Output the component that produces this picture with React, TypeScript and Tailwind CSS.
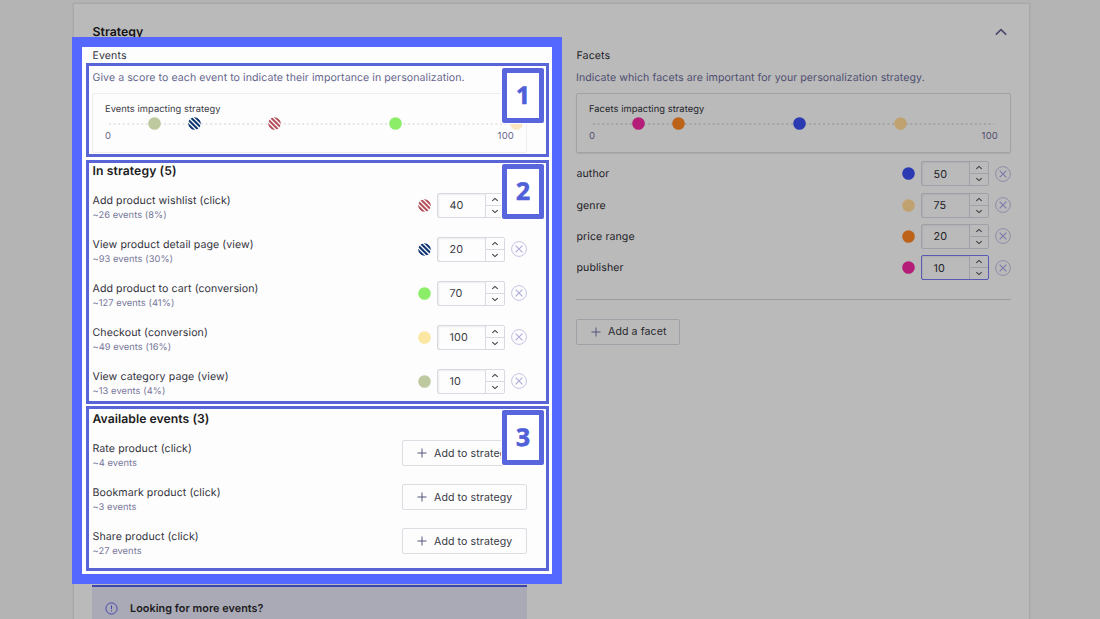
import React from "react";

type Tone = "light" | "dim";

function Dot({ fill, x }: { fill: string; x?: number }) {
  const stripe = fill === "navy" ? "#0f3672" : fill === "red" ? "#b5505a" : null;
  const pos = x === undefined ? "block shrink-0" : "absolute -top-1.5 block";
  return (
    <svg width="13" height="13" viewBox="0 0 13 13" className={pos} style={x === undefined ? undefined : { left: x }}>
      {stripe ? (
        <>
          <defs>
            <clipPath id={"clip-" + fill}>
              <circle cx="6.5" cy="6.5" r="6.3" />
            </clipPath>
          </defs>
          <g clipPath={"url(#clip-" + fill + ")"}>
            <rect width="13" height="13" fill="#fff" />
            <path
              d="M-9.2 -2 L7.8 15 M-4.4 -2 L12.6 15 M0.4 -2 L17.4 15 M5.2 -2 L22.2 15"
              stroke={stripe}
              strokeWidth="2.1"
            />
          </g>
        </>
      ) : (
        <circle cx="6.5" cy="6.5" r="6.3" fill={fill} />
      )}
    </svg>
  );
}

function Chevron({ up, className }: { up?: boolean; className?: string }) {
  return (
    <svg width="8" height="5" viewBox="0 0 8 5" fill="none" stroke="currentColor" strokeWidth="1.1" className={className}>
      <path d={up ? "M1.3 3.8 L4 1.4 L6.7 3.8" : "M1.3 1.2 L4 3.6 L6.7 1.2"} />
    </svg>
  );
}

function Stepper({ value, tone, focused }: { value: number; tone: Tone; focused?: boolean }) {
  const line = focused ? "border-[#5759b4]" : tone === "light" ? "border-[#d9d9e2]" : "border-[#a0a0a8]";
  const inner = tone === "light" ? "border-[#d9d9e2]" : "border-[#a0a0a8]";
  return (
    <div className={"flex h-[25px] w-[68px] shrink-0 rounded-[2px] border " + line}>
      <div className={"flex flex-1 items-center border-r pt-[2px] pl-[11.5px] text-[10.8px] tracking-[0.1px] shadow-[inset_1px_1px_2px_rgba(0,0,0,0.07)] " + inner}>
        {value}
      </div>
      <div className="flex w-[18px] flex-col text-[#3c3c46]">
        <div className={"flex flex-1 items-center justify-center border-b " + inner}>
          <Chevron up />
        </div>
        <div className="flex flex-1 items-center justify-center">
          <Chevron />
        </div>
      </div>
    </div>
  );
}

function Remove({ tone }: { tone: Tone }) {
  return (
    <svg width="16" height="16" viewBox="0 0 16 16" fill="none" className="block shrink-0">
      <circle cx="8" cy="8" r="7.4" stroke={tone === "light" ? "#c5c3e2" : "#8d8da6"} strokeWidth="1" />
      <path d="M4.6 4.6 L11.4 11.4 M11.4 4.6 L4.6 11.4" stroke={tone === "light" ? "#aeabdb" : "#7a7aac"} strokeWidth="1.1" />
    </svg>
  );
}

function PlusButton({ label, tone }: { label: string; tone: Tone }) {
  const look = tone === "light" ? "w-[125px] border-[#dcdce3] text-[#3a3a44]" : "w-[104px] border-[#a0a0a6] text-[#29292f]";
  return (
    <button className={"flex h-[26px] items-center rounded-[2px] border pl-[14px] text-[10.6px] tracking-[0.09px] whitespace-nowrap " + look}>
      <svg width="10" height="10" viewBox="0 0 10 10" stroke="#55557c" strokeWidth="1" className="mr-[7px] shrink-0">
        <path d="M5 0.5V9.5M0.5 5H9.5" />
      </svg>
      <span className="pt-px">{label}</span>
    </button>
  );
}

function ScaleCard({ title, tone, marks }: { title: string; tone: Tone; marks: { fill: string; x: number }[] }) {
  const look = tone === "light" ? "border-[#ededf2]" : "border-[#a2a2a6] shadow-[0_1px_1px_rgba(0,0,0,0.08)]";
  return (
    <div className={"h-[60px] w-[435px] rounded-[2px] border px-3 pt-2 " + look}>
      <div className={"h-[15px] text-[9.3px] leading-[16px] tracking-[0.07px] " + (tone === "light" ? "text-[#3a3a44]" : "text-[#222228]")}>{title}</div>
      <div className="relative mt-[6px] h-[2px]">
        <svg width="409" height="2" className="block">
          <path d="M4 1H405" stroke={tone === "light" ? "#cfcfd6" : "#909098"} strokeWidth="1" strokeDasharray="2 2.6" />
        </svg>
        {marks.map((m) => (
          <Dot key={m.x} fill={m.fill} x={m.x} />
        ))}
      </div>
      <div className={"mt-[5px] flex justify-between text-[9.5px] leading-[13px] tracking-[0.02em] " + (tone === "light" ? "text-[#66668a]" : "text-[#50506e]")}>
        <span>0</span>
        <span>100</span>
      </div>
    </div>
  );
}

function EventName({ name, sub }: { name: string; sub: string }) {
  return (
    <div className="flex-1 pt-[6px] pl-[0.5px]">
      <div className="h-[14px] text-[10.6px] leading-[16px] tracking-[0.08px] text-[#33333c]">{name}</div>
      <div className="h-[16px] text-[9.3px] leading-[17px] tracking-[0.07px] text-[#77779a]">{sub}</div>
    </div>
  );
}

const events = [
  { name: "Add product wishlist (click)", sub: "~26 events (8%)", fill: "red", value: 40 },
  { name: "View product detail page (view)", sub: "~93 events (30%)", fill: "navy", value: 20 },
  { name: "Add product to cart (conversion)", sub: "~127 events (41%)", fill: "#8cee68", value: 70 },
  { name: "Checkout (conversion)", sub: "~49 events (16%)", fill: "#fbe6a2", value: 100 },
  { name: "View category page (view)", sub: "~13 events (4%)", fill: "#bec9a0", value: 10 },
];

const available = [
  { name: "Rate product (click)", sub: "~4 events" },
  { name: "Bookmark product (click)", sub: "~3 events" },
  { name: "Share product (click)", sub: "~27 events" },
];

const facets = [
  { name: "author", fill: "#2b39b3", value: 50 },
  { name: "genre", fill: "#bfa270", value: 75 },
  { name: "price range", fill: "#bd6219", value: 20 },
  { name: "publisher", fill: "#b41d78", value: 10 },
];

const zones = [
  { n: 1, box: "top-[63px] h-[94px]", badge: "top-[68px]" },
  { n: 2, box: "top-[160px] h-[244px]", badge: "top-[164px]" },
  { n: 3, box: "top-[406px] h-[165px]", badge: "top-[410px]" },
];

export default function App() {
  return (
    <div className="relative h-[619px] w-[1100px] overflow-hidden bg-[#b4b4b4] pt-[3px] pl-[73px] font-['Inter',sans-serif] [text-rendering:geometricPrecision]">
      <div className="h-[640px] w-[957px] border border-[#a9a9ab] bg-[#bababa] px-[18px] shadow-[0_0_2px_rgba(0,0,0,0.08)]">
        <div className="flex h-[43px] items-center justify-between pt-[14px] pl-[0.5px]">
          <h2 className="mb-px text-[12.3px] font-semibold tracking-[0.02px] text-[#111114]">Strategy</h2>
          <svg width="14" height="8" viewBox="0 0 14 8" fill="none" stroke="#48486c" strokeWidth="1.6" className="mr-[3px] mb-[2px]">
            <path d="M1.8 6.6 L7 1.6 L12.2 6.6" />
          </svg>
        </div>
        <div className="absolute top-[37px] left-[72px] h-[547px] w-[490px] border-[10px] border-[#5468ff] bg-[#fdfdfd]" />
        <div className="relative flex gap-[49px]">
          <section className="w-[435px]">
            <div className="h-[16px] pl-[0.5px] text-[10.6px] leading-[18px] tracking-[0.1px] text-[#33333c]">Events</div>
            <p className="mt-[6px] h-[16px] pl-[0.5px] text-[10.6px] leading-[18px] tracking-[0.06px] whitespace-nowrap text-[#66668c]">
              Give a score to each event to indicate their importance in personalization.
            </p>
            <div className="mt-[8px]">
              <ScaleCard
                title="Events impacting strategy"
                tone="light"
                marks={[
                  { fill: "#bec9a0", x: 43 },
                  { fill: "navy", x: 83 },
                  { fill: "red", x: 163 },
                  { fill: "#8cee68", x: 284 },
                  { fill: "#fbe6c2", x: 405 },
                ]}
              />
            </div>
            <h3 className="mt-[10px] h-[17px] pl-[0.5px] text-[12.2px] leading-[16px] font-semibold tracking-[0.1px] text-[#1b1b20]">In strategy (5)</h3>
            <div className="mt-[3px]">
              {events.map((e) => (
                <div key={e.name} className="flex h-[44px] items-center pr-[0.5px]">
                  <EventName name={e.name} sub={e.sub} />
                  <Dot fill={e.fill} />
                  <div className="w-[6px]" />
                  <div className="text-[#3a3a44]">
                    <Stepper value={e.value} tone="light" />
                  </div>
                  <div className="w-[5.5px]" />
                  <Remove tone="light" />
                </div>
              ))}
            </div>
            <h3 className="mt-[8px] h-[17px] pl-[0.5px] text-[12.2px] leading-[16px] font-semibold tracking-[0.05px] text-[#1b1b20]">Available events (3)</h3>
            <div className="mt-[3px]">
              {available.map((e) => (
                <div key={e.name} className="flex h-[44px] items-center">
                  <EventName name={e.name} sub={e.sub} />
                  <PlusButton label="Add to strategy" tone="light" />
                </div>
              ))}
            </div>
            <div className="mt-[22px] flex h-[60px] border-t-2 border-[#3d44ae] bg-[#aaaab7] pt-[12px] pl-[13px]">
              <svg width="13" height="13" viewBox="0 0 13 13" fill="none" stroke="#4549ae" className="mt-[3px] mr-[12px]">
                <circle cx="6.5" cy="6.5" r="5.6" />
                <path d="M6.5 3.4V7.2M6.5 8.4V9.5" />
              </svg>
              <span className="text-[10.8px] leading-[19px] font-semibold tracking-[0.06px] text-[#1b1b20]">Looking for more events?</span>
            </div>
          </section>
          <section className="w-[435px]">
            <div className="h-[16px] pl-[0.5px] text-[10.6px] leading-[18px] tracking-[0.1px] text-[#222228]">Facets</div>
            <p className="mt-[6px] h-[16px] text-[10.6px] leading-[18px] tracking-[0.06px] whitespace-nowrap text-[#4e4e70]">
              Indicate which facets are important for your personalization strategy.
            </p>
            <div className="mt-[8px]">
              <ScaleCard
                title="Facets impacting strategy"
                tone="dim"
                marks={[
                  { fill: "#b41d78", x: 43 },
                  { fill: "#bd6219", x: 83 },
                  { fill: "#2b39b3", x: 204 },
                  { fill: "#bfa270", x: 305 },
                ]}
              />
            </div>
            <div className="mt-[5px] border-b border-[#9c9ca0] pb-[15px] text-[#222228]">
              {facets.map((f) => (
                <div key={f.name} className="flex h-[31.4px] items-center text-[10.6px]">
                  <span className="flex-1 pt-px pl-[0.5px] tracking-[0.08px]">{f.name}</span>
                  <Dot fill={f.fill} />
                  <div className="w-[6px]" />
                  <Stepper value={f.value} tone="dim" focused={f.name === "publisher"} />
                  <div className="w-[6px]" />
                  <Remove tone="dim" />
                </div>
              ))}
            </div>
            <div className="mt-[19px]">
              <PlusButton label="Add a facet" tone="dim" />
            </div>
          </section>
        </div>
      </div>
      {zones.map((z) => (
        <React.Fragment key={z.n}>
          <div className={"absolute left-[85.5px] w-[463px] border-[3px] border-[#5965d6] shadow-[0_0_0_1px_#fff] " + z.box} />
          <div
            className={
              "absolute left-[502px] flex h-[55px] w-[42px] items-center justify-center rounded-[2px] border-[5px] border-[#5965dc] bg-white pt-px text-[24.5px] font-bold text-[#5060d8] shadow-[0_0_0_1px_#fff] [-webkit-text-stroke:0.7px_#5060d8] font-['Noto_Sans',sans-serif] " +
              z.badge
            }
          >
            {z.n}
          </div>
        </React.Fragment>
      ))}
    </div>
  );
}
